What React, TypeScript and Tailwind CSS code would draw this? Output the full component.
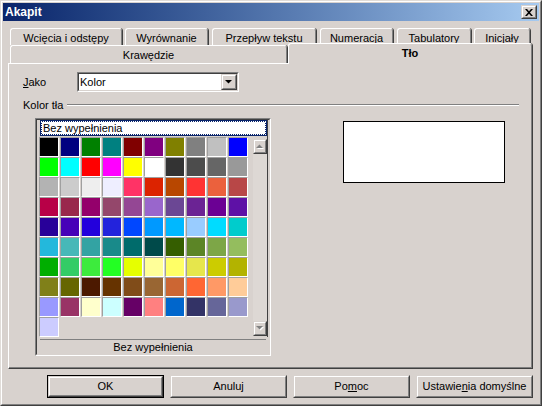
import React from "react";

const COLORS = [
  "#000000","#000080","#008000","#008080","#800000","#800080","#808000","#808080","#c0c0c0","#0000ff",
  "#00ff00","#00ffff","#ff0000","#ff00ff","#ffff00","#ffffff","#333333","#4c4c4c","#666666","#999999",
  "#b3b3b3","#cccccc","#eeeeee","#eeeeff","#ff3366","#dc2300","#b84700","#ff3333","#eb613d","#b84747",
  "#b80047","#99284c","#94006b","#94476b","#944794","#9966cc","#6b4794","#6b2394","#6b0094","#5e11a6",
  "#280099","#4700b8","#2300dc","#2323dc","#0047ff","#0099ff","#00b8ff","#99ccff","#00dcff","#00cccc",
  "#23b8dc","#47b8b8","#33a3a3","#198a8a","#006b6b","#004a4a","#355e00","#5c8526","#7da647","#94bd5e",
  "#00ae00","#33cc66","#3deb3d","#23ff23","#e6ff00","#ffff99","#ffff66","#e6e64c","#cccc00","#b3b300",
  "#808019","#666600","#4c1900","#663300","#804c19","#996633","#cc6633","#ff6633","#ff9966","#ffcc99",
  "#9999ff","#993366","#ffffcc","#ccffff","#660066","#ff8080","#0066cc","#333366","#666699","#9999cc",
  "#ccccff",
];

function Raised({ className, children }: { className: string; children?: React.ReactNode }) {
  return (
    <div className={`${className} border border-t-[#d8d2ce] border-l-[#d8d2ce] border-r-[#404040] border-b-[#404040] bg-[#d8d2ce]`}>
      <div className="w-full h-full border border-t-white border-l-white border-r-[#808080] border-b-[#808080] flex items-center justify-center">
        {children}
      </div>
    </div>
  );
}

function Tab({ c, children }: { c: string; children: React.ReactNode }) {
  return (
    <div className={`${c} h-full border-r border-r-[#404040] rounded-tr-[3px]`}>
      <div className="h-full border-l border-t border-l-white border-t-white border-r border-r-[#808080] rounded-t-[3px] flex items-center justify-center pt-[2px]">
        {children}
      </div>
    </div>
  );
}

function Arrow({ up, color = "#808080", shadow = true }: { up: boolean; color?: string; shadow?: boolean }) {
  const pts = up ? "0,4 3.5,0.5 7,4" : "0,0 7,0 3.5,3.5";
  const sh = up ? "1,5 4.5,1.5 8,5" : "1,1 8,1 4.5,4.5";
  return (
    <svg width="8" height="5" viewBox="0 0 8 5">
      {shadow && <polygon points={sh} fill="#ffffff" />}
      <polygon points={pts} fill={color} />
    </svg>
  );
}

function DlgButton({ children, def = false }: { children: React.ReactNode; def?: boolean }) {
  if (def) {
    return (
      <div className="w-[117px] h-[23px] border border-black">
        <Raised className="w-full h-full">{children}</Raised>
      </div>
    );
  }
  return <Raised className="w-[117px] h-[23px]">{children}</Raised>;
}

export default function App() {
  return (
    <div className="w-[542px] h-[406px] border border-t-[#e0dcd8] border-l-[#e0dcd8] border-r-[#404040] border-b-[#404040] font-['Liberation_Sans',Arial,sans-serif] text-[11px] text-black leading-none select-none">
      <div className="w-full h-full border border-t-white border-l-white border-r-[#808080] border-b-[#808080] bg-[#d8d2ce] p-px flex flex-col">
        {/* Title bar */}
        <div className="h-[18px] shrink-0 flex items-center justify-between pl-[2px] pr-[2px] bg-linear-to-r from-[#0a246a] to-[#a6caf0]">
          <span className="text-white font-bold text-[12px]">Akapit</span>
          <Raised className="w-[16px] h-[14px]">
            <svg width="8" height="7" viewBox="0 0 8 7">
              <path d="M0 0 L2 0 L4 2.3 L6 0 L8 0 L5 3.5 L8 7 L6 7 L4 4.7 L2 7 L0 7 L3 3.5 Z" fill="#000" />
            </svg>
          </Raised>
        </div>

        {/* Tabs + panel */}
        <div className="ml-[5px] mr-[6px] mt-[7px] flex flex-col">
          <div className="h-[17px] flex pl-[2px]">
            <Tab c="w-[113px]">Wcięcia i odstępy</Tab>
            <Tab c="w-[84px] ml-[2px]">Wyrównanie</Tab>
            <Tab c="w-[105px] ml-[3px]">Przepływ tekstu</Tab>
            <Tab c="w-[74px] ml-[3px]">Numeracja</Tab>
            <Tab c="w-[75px] ml-[3px]">Tabulatory</Tab>
            <Tab c="w-[57px] ml-[2px]">Inicjały</Tab>
          </div>
          <div className="h-[18px] flex pl-[2px]">
            <Tab c="w-[278px]">Krawędzie</Tab>
            <div className="w-[245px] h-[21px] -mt-[2px] relative z-10 border-r border-r-[#404040] rounded-tr-[3px] bg-[#d8d2ce]">
              <div className="h-full border-l border-t border-l-white border-t-white border-r border-r-[#808080] rounded-t-[3px] flex items-center justify-center font-bold pb-[2px]">
                Tło
              </div>
            </div>
          </div>

          {/* Panel */}
          <div className="h-[306px] border border-t-white border-l-white border-r-[#404040] border-b-[#404040]">
            <div className="w-full h-full border-r border-b border-r-[#808080] border-b-[#808080] flex flex-col">
              {/* Jako */}
              <div className="mt-[8px] h-[20px] flex items-center pl-[14px]">
                <span className="w-[54px]">
                  <span className="underline">J</span>ako
                </span>
                <div className="w-[162px] h-[20px] border border-t-[#808080] border-l-[#808080] border-r-white border-b-white">
                  <div className="w-full h-full border border-t-[#404040] border-l-[#404040] border-r-[#d8d2ce] border-b-[#d8d2ce] bg-white flex items-center">
                    <span className="pl-[1px] flex-1">Kolor</span>
                    <Raised className="w-[16px] h-[16px]">
                      <Arrow up={false} color="#000000" shadow={false} />
                    </Raised>
                  </div>
                </div>
              </div>

              {/* Kolor tła */}
              <div className="mt-[7px] h-[12px] flex items-center pl-[14px] pr-[12px]">
                <span>Kolor tła</span>
                <div className="flex-1 ml-[4px] h-[2px] border-t border-t-[#808080] border-b border-b-white" />
              </div>

              {/* Main */}
              <div className="mt-[7px] flex items-start pl-[26px]">
                <div className="w-[236px] h-[238px] shrink-0 border border-t-[#808080] border-l-[#808080] border-r-white border-b-white">
                  <div className="w-full h-full border border-t-[#404040] border-l-[#404040] border-r-[#d8d2ce] border-b-[#d8d2ce] flex flex-col">
                    <div className="mr-[1px] border-r border-r-[#404040] flex flex-col">
                      <div className="ml-[3px] w-[227px] h-[16px] border border-[#0a246a] bg-[#0a246a]">
                        <div className="w-full h-full border border-dotted border-white">
                          <div className="w-full h-full bg-white flex items-center pl-[1px]">Bez wypełnienia</div>
                        </div>
                      </div>
                      <div className="flex mt-[1px]">
                        <div className="ml-[2px] grid grid-cols-[repeat(10,20px)] auto-rows-[20px] gap-x-[1px]">
                          {COLORS.map((c, i) => (
                            <div key={i} className="border border-t-[#a0a0a0] border-l-[#a0a0a0] border-r-white border-b-white">
                              <div className="w-full h-full" style={{ background: c }} />
                            </div>
                          ))}
                        </div>
                        <div className="ml-auto w-[14px] flex flex-col mt-[2px] mb-[1px]">
                          <Raised className="w-[14px] h-[15px] shrink-0">
                            <Arrow up={true} />
                          </Raised>
                          <div className="flex-1 bg-[#ddd8d4]" />
                          <Raised className="w-[14px] h-[15px] shrink-0">
                            <Arrow up={false} />
                          </Raised>
                        </div>
                      </div>
                    </div>
                    <div className="mx-[3px] mt-[2px] h-px bg-[#808080]" />
                    <div className="h-[14px] flex items-center justify-center pt-[1px]">Bez wypełnienia</div>
                  </div>
                </div>
                <div className="ml-[72px] mt-[3px] w-[162px] h-[62px] bg-white border border-black" />
              </div>
            </div>
          </div>
        </div>

        {/* Buttons */}
        <div className="mt-[6px] mr-[6px] flex justify-end gap-[6px]">
          <DlgButton def>OK</DlgButton>
          <DlgButton>Anuluj</DlgButton>
          <DlgButton>
            Po<span className="underline">m</span>oc
          </DlgButton>
          <DlgButton>
            Ustawie<span className="underline">n</span>ia domyślne
          </DlgButton>
        </div>
      </div>
    </div>
  );
}
